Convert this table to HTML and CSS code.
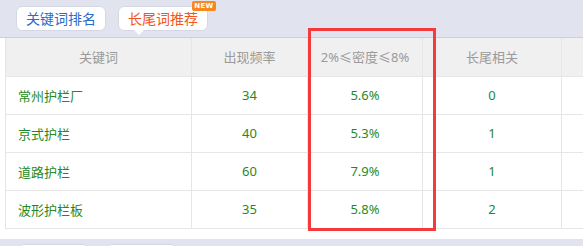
FILE: index.html
```html
<!DOCTYPE html>
<html lang="zh">
<head>
<meta charset="utf-8">
<link rel="stylesheet" href="styles.css">
</head>
<body>
<div class="page">
  <div class="tabs">
    <button class="tab tab-blue">关键词排名</button>
    <button class="tab tab-orange active">长尾词推荐<span class="badge">NEW</span></button>
  </div>
  <table class="grid">
    <colgroup>
      <col class="c1"><col class="c2"><col class="c3"><col class="c4"><col class="c5">
    </colgroup>
    <thead>
      <tr><th>关键词</th><th>出现频率</th><th>2%≤密度≤8%</th><th>长尾相关</th><th></th></tr>
    </thead>
    <tbody>
      <tr><td class="kw">常州护栏厂</td><td>34</td><td>5.6%</td><td>0</td><td></td></tr>
      <tr><td class="kw">京式护栏</td><td>40</td><td>5.3%</td><td>1</td><td></td></tr>
      <tr><td class="kw">道路护栏</td><td>60</td><td>7.9%</td><td>1</td><td></td></tr>
      <tr><td class="kw">波形护栏板</td><td>35</td><td>5.8%</td><td>2</td><td></td></tr>
    </tbody>
  </table>
  <div class="bottom-band">
    <span class="mini"></span>
    <span class="mini"></span>
  </div>
  <div class="highlight"></div>
</div>
</body>
</html>
```
FILE: styles.css
```css
html, body {
  margin: 0;
  padding: 0;
  background: #ffffff;
  overflow: hidden;
}
.page {
  position: relative;
  width: 583px;
  height: 246px;
  overflow: hidden;
  font-family: "Noto Sans CJK SC", "Noto Sans", sans-serif;
}
.tabs {
  height: 38px;
  background: #e1e4ee;
  border-bottom: 1px solid #cad0df;
  display: flex;
  gap: 12px;
  padding: 6px 0 0 16px;
  box-sizing: border-box;
}
.tab {
  position: relative;
  width: 90px;
  height: 25px;
  border: 1px solid #d3d8e4;
  border-radius: 6px;
  background: #ffffff;
  font-family: inherit;
  font-size: 14px;
  line-height: 21px;
  padding: 0;
  box-sizing: border-box;
}
.tab-blue { color: #2a6bcc; }
.tab-orange { color: #f2561d; }
.tab.active::after {
  content: "";
  position: absolute;
  left: 15px;
  bottom: -5px;
  border-left: 5px solid transparent;
  border-right: 5px solid transparent;
  border-top: 5px solid #ffffff;
}
.badge {
  position: absolute;
  top: -6px;
  right: -9px;
  width: 24px;
  height: 10px;
  background: #f5891f;
  color: #ffffff;
  font-family: "DejaVu Sans", sans-serif;
  font-size: 7px;
  font-weight: bold;
  line-height: 10px;
  border-radius: 2px;
  text-align: center;
  letter-spacing: 0.3px;
}
.grid {
  margin-left: 5px;
  width: 680px;
  table-layout: fixed;
  border-collapse: collapse;
  font-family: "Noto Sans", "Noto Sans CJK SC", sans-serif;
  font-size: 13px;
}
.c1 { width: 186px; }
.c2 { width: 116px; }
.c3 { width: 115px; }
.c4 { width: 139px; }
.c5 { width: 124px; }
.grid th, .grid td {
  border: 1px solid #e6e6e6;
  height: 38px;
  padding: 0;
  text-align: center;
  box-sizing: border-box;
}
.grid th {
  border-top: none;
  background: #f0f0f0;
  color: #9a9a9a;
  font-weight: normal;
}
.grid td {
  color: #1f8a25;
  background: #ffffff;
}
.grid td.kw {
  text-align: left;
  padding-left: 12px;
}
.bottom-band {
  margin-top: 10px;
  height: 20px;
  background: #e1e4ee;
  display: flex;
  gap: 19px;
  padding: 5px 0 0 19px;
  box-sizing: border-box;
}
.mini {
  width: 69px;
  height: 20px;
  background: #ffffff;
  border: 1px solid #d3d8e4;
  border-radius: 5px;
  box-sizing: border-box;
}
.highlight {
  position: absolute;
  left: 308px;
  top: 28px;
  width: 128px;
  height: 203px;
  border: 3px solid #f43a3a;
  box-sizing: border-box;
}
```
